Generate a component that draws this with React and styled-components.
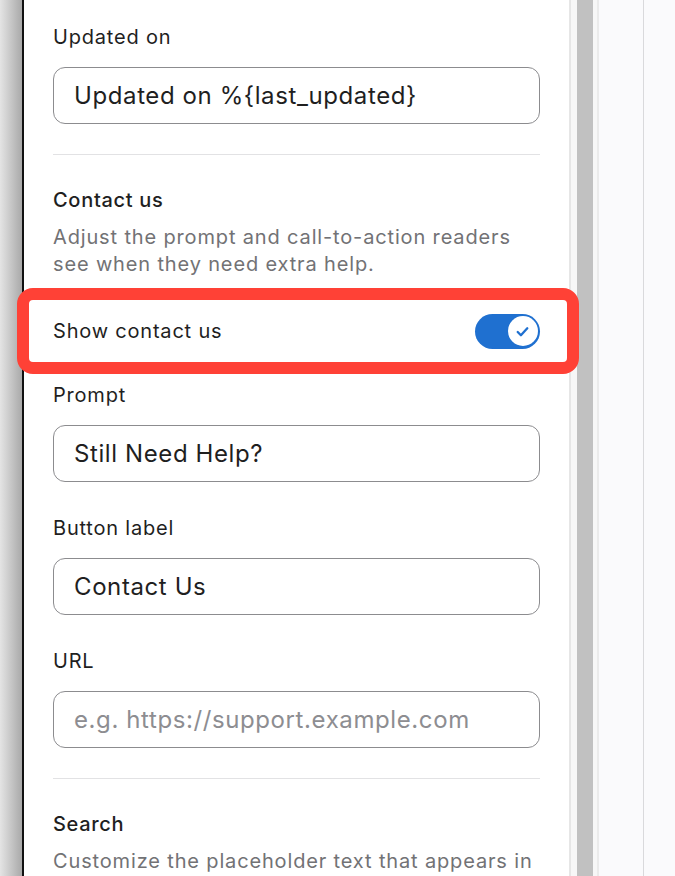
import React, {useState} from 'react';
import styled, {createGlobalStyle} from 'styled-components';

const GlobalStyle = createGlobalStyle`
    html, body {
        margin: 0;
        padding: 0;
        background: #fafafc;
    }
    body {
        font-family: Inter, "Noto Sans", sans-serif;
        color: #1f1f1f;
        -webkit-font-smoothing: antialiased;
    }
`;

const Screen = styled.div`
    display: flex;
    height: 876px;
    overflow: hidden;
`;

const Gutter = styled.div`
    width: 22px;
    flex-shrink: 0;
    background: linear-gradient(to right, #e4e4e4, #a9a9a9);
    border-right: 2px solid #111;
`;

const Panel = styled.div`
    width: 545px;
    flex-shrink: 0;
    background: #fff;
    box-sizing: border-box;
    padding: 22px 29px 0;
`;

const ScrollTrack = styled.div`
    width: 30px;
    flex-shrink: 0;
    box-sizing: border-box;
    display: flex;
    background: #f7f7f7;
    border-left: 2px solid #e6e6e6;
    border-right: 2px solid #ebebeb;
    padding: 0 4px 0 6px;
`;

const Thumb = styled.div`
    flex: 1;
    background: #c1c1c1;
`;

const Preview = styled.div`
    flex: 1;
    display: flex;
    background: #fafafc;
`;

const PreviewRail = styled.div`
    width: 44px;
    border-right: 1px solid #d9d9dc;
`;

const Section = styled.section`
    display: flex;
    flex-direction: column;
    padding: ${p => p.$top || 0}px 0 30px;
    border-bottom: ${p => p.$last ? 'none' : '1px solid #e2e2e4'};
`;

const Field = styled.div`
    display: flex;
    flex-direction: column;
    & + & {
        margin-top: 31px;
    }
`;

const Label = styled.label`
    font-size: 20px;
    line-height: 28px;
    letter-spacing: 0.8px;
    color: #1f1f1f;
    padding-top: 1px;
    margin-bottom: 16px;
`;

const Heading = styled.h3`
    margin: 0 0 10px;
    font-size: 20px;
    line-height: 28px;
    letter-spacing: 0.7px;
    font-weight: 500;
    color: #1f1f1f;
`;

const Description = styled.p`
    margin: 0;
    font-size: 20px;
    line-height: 27px;
    letter-spacing: 0.85px;
    color: #727275;
`;

const Input = styled.input`
    box-sizing: border-box;
    width: 100%;
    height: 57px;
    padding: 0 20px;
    border: 1.5px solid #8c8c8f;
    border-radius: 12px;
    font-family: inherit;
    font-size: 24px;
    letter-spacing: 0.6px;
    color: #1f1f1f;
    background: #fff;
    outline: none;
    &::placeholder {
        color: #8d8d91;
    }
`;

const ToggleRow = styled.div`
    position: relative;
    display: flex;
    align-items: center;
    justify-content: space-between;
    height: 62px;
    margin: 22px 0 18px;
    font-size: 20px;
    letter-spacing: 0.8px;
`;

const Highlight = styled.div`
    position: absolute;
    top: -12px;
    bottom: -12px;
    left: -36px;
    right: -39px;
    border: 12px solid #ff4136;
    border-radius: 16px;
    pointer-events: none;
`;

const Switch = styled.button`
    position: relative;
    width: 65px;
    height: 35px;
    padding: 0;
    border: none;
    border-radius: 18px;
    background: ${p => p.$on ? '#1f70d0' : '#c4c4c8'};
    cursor: pointer;
`;

const Knob = styled.span`
    position: absolute;
    top: 2.5px;
    left: ${p => p.$on ? '32.5px' : '2.5px'};
    width: 30px;
    height: 30px;
    border-radius: 50%;
    background: #fff;
    display: flex;
    align-items: center;
    justify-content: center;
`;

const Check = () => (
    <svg width="17" height="17" viewBox="0 0 16 16" fill="none">
        <path d="M3.5 8.5l3 3 6-6.5" stroke="#1f70d0" strokeWidth="2.2" strokeLinecap="round" strokeLinejoin="round"/>
    </svg>
);

const App = () => {
    const [showContact, setShowContact] = useState(true);

    return (
        <>
        <GlobalStyle/>
        <Screen>
            <Gutter/>
            <Panel>
                <Section>
                    <Field>
                        <Label>Updated on</Label>
                        <Input defaultValue="Updated on %{last_updated}"/>
                    </Field>
                </Section>

                <Section $top={31}>
                    <Heading>Contact us</Heading>
                    <Description>Adjust the prompt and call-to-action readers see when they need extra help.</Description>
                    <ToggleRow>
                        <span>Show contact us</span>
                        <Switch $on={showContact} onClick={() => setShowContact(!showContact)}>
                            <Knob $on={showContact}>{showContact && <Check/>}</Knob>
                        </Switch>
                        <Highlight/>
                    </ToggleRow>
                    <Field>
                        <Label>Prompt</Label>
                        <Input defaultValue="Still Need Help?"/>
                    </Field>
                    <Field>
                        <Label>Button label</Label>
                        <Input defaultValue="Contact Us"/>
                    </Field>
                    <Field>
                        <Label>URL</Label>
                        <Input placeholder="e.g. https://support.example.com"/>
                    </Field>
                </Section>

                <Section $top={31} $last>
                    <Heading>Search</Heading>
                    <Description>Customize the placeholder text that appears in the search field.</Description>
                </Section>
            </Panel>
            <ScrollTrack><Thumb/></ScrollTrack>
            <Preview><PreviewRail/></Preview>
        </Screen>
        </>
    );
};

export default App;
